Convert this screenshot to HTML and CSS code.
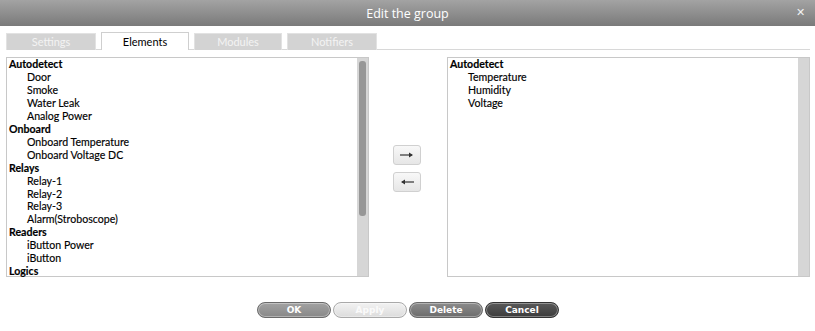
FILE: index.html
```html
<!DOCTYPE html>
<html lang="en">
<head>
  <meta charset="UTF-8">
  <title>Edit the group</title>
  <link rel="stylesheet" href="styles.css">
</head>
<body>

<div class="dialog">
  <div class="titlebar">
    <span class="title">Edit the group</span>
    <span class="close">&#x2715;</span>
  </div>

  <div class="tabs">
    <div class="tab">Settings</div>
    <div class="tab active">Elements</div>
    <div class="tab">Modules</div>
    <div class="tab">Notifiers</div>
  </div>

  <div class="lists">
    <div class="listbox">
      <div class="items">
        <div class="group">Autodetect</div>
        <div class="item">Door</div>
        <div class="item">Smoke</div>
        <div class="item">Water Leak</div>
        <div class="item">Analog Power</div>
        <div class="group">Onboard</div>
        <div class="item">Onboard Temperature</div>
        <div class="item">Onboard Voltage DC</div>
        <div class="group">Relays</div>
        <div class="item">Relay-1</div>
        <div class="item">Relay-2</div>
        <div class="item">Relay-3</div>
        <div class="item">Alarm(Stroboscope)</div>
        <div class="group">Readers</div>
        <div class="item">iButton Power</div>
        <div class="item">iButton</div>
        <div class="group">Logics</div>
      </div>
      <div class="scrollbar"><div class="thumb"></div></div>
    </div>

    <div class="movers">
      <button class="mover">
        <svg width="14" height="6" viewBox="0 0 14 6"><path d="M0 3H12" stroke="#333" stroke-width="1.2"/><path d="M9 0.5L13 3L9 5.5Z" fill="#333"/></svg>
      </button>
      <button class="mover">
        <svg width="14" height="6" viewBox="0 0 14 6"><path d="M2 3H14" stroke="#333" stroke-width="1.2"/><path d="M5 0.5L1 3L5 5.5Z" fill="#333"/></svg>
      </button>
    </div>

    <div class="listbox">
      <div class="items">
        <div class="group">Autodetect</div>
        <div class="item">Temperature</div>
        <div class="item">Humidity</div>
        <div class="item">Voltage</div>
      </div>
      <div class="scrollbar"></div>
    </div>
  </div>

  <div class="actions">
    <button class="btn btn-ok">OK</button>
    <button class="btn btn-apply">Apply</button>
    <button class="btn btn-delete">Delete</button>
    <button class="btn btn-cancel">Cancel</button>
  </div>
</div>

</body>
</html>
```

FILE: styles.css
```css
* {
  margin: 0;
  padding: 0;
  box-sizing: border-box;
}

body {
  width: 815px;
  height: 331px;
  background: #fff;
  font-family: Lato, "Open Sans", sans-serif;
  color: #111;
  overflow: hidden;
}

.titlebar {
  height: 26px;
  background: linear-gradient(#a3a3a3, #7a7a7a);
  display: flex;
  align-items: center;
  justify-content: center;
  position: relative;
  color: #fff;
}

.title {
  font-family: "Open Sans", sans-serif;
  font-size: 12.5px;
}

.close {
  position: absolute;
  right: 10px;
  top: 5px;
  font-size: 11px;
  color: #f2f2f2;
}

.tabs {
  display: flex;
  gap: 5px;
  margin: 6px 5px 0 6px;
  height: 18px;
  border-bottom: 1px solid #d8d8d8;
}

.tab {
  width: 90px;
  height: 17px;
  margin-top: 1px;
  background: #d3d3d3;
  color: #f4f4f4;
  font-size: 11px;
  text-align: center;
  line-height: 16px;
  border: 1px solid #e2e2e2;
  border-bottom: none;
}

.tab.active {
  width: 88px;
  height: 18px;
  margin-top: 0;
  line-height: 17px;
  background: #fff;
  color: #000;
  border-color: #cfcfcf;
}

.tabs .tab:nth-child(3) { width: 88px; }

.lists {
  display: flex;
  margin: 7px 5px 0 6px;
  height: 220px;
}

.listbox {
  width: 363px;
  height: 220px;
  border: 1px solid #c8c8c8;
  display: flex;
}

.items {
  flex: 1;
  padding: 0 0 0 2px;
  font-size: 10.6px;
  line-height: 12.95px;
  color: #000;
  -webkit-text-stroke: 0.15px #000;
}

.group {
  font-weight: bold;
}

.item {
  padding-left: 18px;
}

.scrollbar {
  width: 11px;
  background: #d6d6d6;
  padding: 3px 2px 0 2px;
}

.thumb {
  height: 155px;
  background: #979797;
  border-radius: 3px;
}

.movers {
  width: 78px;
  display: flex;
  flex-direction: column;
  align-items: center;
  justify-content: center;
  gap: 7px;
  padding: 2px 3px 0 0;
}

.mover {
  width: 28px;
  height: 20px;
  border: 1px solid #d0d0d0;
  border-radius: 3px;
  background: linear-gradient(#f8f8f8, #e6e6e6);
  display: flex;
  align-items: center;
  justify-content: center;
}

.actions {
  display: flex;
  justify-content: center;
  gap: 2px;
  margin-top: 25px;
  padding-left: 1px;
}

.btn {
  width: 74px;
  height: 16px;
  border-radius: 8px;
  font-family: "DejaVu Sans", sans-serif;
  font-size: 9px;
  font-weight: bold;
  color: #fff;
  border: 1px solid #6a6a6a;
  box-shadow: inset 0 0 0 1px rgba(255,255,255,0.35);
}

.btn-ok {
  background: linear-gradient(#a2a2a2, #888);
}

.btn-apply {
  background: linear-gradient(#f2f2f2, #dcdcdc);
  border-color: #a9a9a9;
  color: #fafafa;
}

.btn-delete {
  background: linear-gradient(#8c8c8c, #6c6c6c);
}

.btn-cancel {
  background: linear-gradient(#5a5a5a, #3c3c3c);
  border-color: #333;
}
```
